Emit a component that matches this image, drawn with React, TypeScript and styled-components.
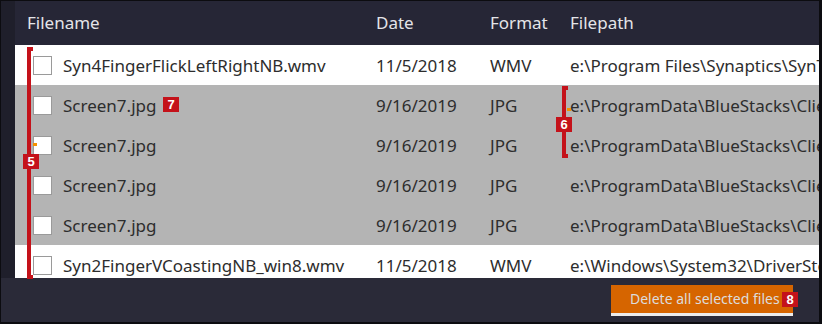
import React from 'react';
import styled, { createGlobalStyle } from 'styled-components';

const GlobalStyle = createGlobalStyle`
  html, body { margin: 0; padding: 0; background: #2a2a38; }
  body { font-family: "Noto Sans", "Open Sans", sans-serif; }
`;

// layout
const Frame = styled.div`
  position: relative;
  width: 822px;
  height: 324px;
  box-sizing: border-box;
  border: 1px solid #0c0c10;
  border-right-width: 3px;
  border-bottom-width: 2px;
  background: #2a2a38;
  display: flex;
  flex-direction: column;
  overflow: hidden;
`;

const Body = styled.div`
  display: flex;
  height: 277px;
`;

const LeftStrip = styled.div`
  width: 14px;
  background: #1f1f2b;
`;

const Table = styled.div`
  flex: 1;
  overflow: hidden;
`;

const Row = styled.div<{ $bg: string; $h: number }>`
  display: grid;
  grid-template-columns: 351px 114px 80px 1fr;
  height: ${(p) => p.$h}px;
  align-items: center;
  background: ${(p) => p.$bg};
  font-size: 17px;
  color: #2d2d2d;
  white-space: nowrap;
`;

const Head = styled(Row)`
  color: #e4e4e8;
  padding-bottom: 2px;
  box-sizing: border-box;
`;

const Cell = styled.div<{ $pl?: number }>`
  padding-left: ${(p) => p.$pl ?? 10}px;
  overflow: hidden;
  display: flex;
  align-items: center;
`;

const Check = styled.span`
  width: 17px;
  height: 17px;
  border: 1px solid #9a9a9a;
  background: #fff;
  margin-right: 11px;
  flex: none;
`;

const Footer = styled.div`
  flex: 1;
  display: flex;
  justify-content: flex-end;
  align-items: flex-start;
  padding: 7px 26px 0 0;
`;

const DeleteBtn = styled.button`
  width: 182px;
  height: 31px;
  border: none;
  border-bottom: 3px solid #ececec;
  background: #d66500;
  color: #dcdcdc;
  font-family: "Noto Sans", "Open Sans", sans-serif;
  font-size: 14px;
  text-align: left;
  padding: 0 0 1px 19px;
`;

// annotations
const Badge = styled.span<{ $x: number; $y: number }>`
  position: absolute;
  left: ${(p) => p.$x}px;
  top: ${(p) => p.$y}px;
  width: 16px;
  height: 15px;
  background: #c4121a;
  color: #fff;
  font-family: "Liberation Sans", Arial, sans-serif;
  font-weight: bold;
  font-size: 13px;
  line-height: 15px;
  text-align: center;
`;

const Bracket = styled.span<{ $x: number; $y: number; $h: number }>`
  position: absolute;
  left: ${(p) => p.$x}px;
  top: ${(p) => p.$y}px;
  width: 6px;
  height: ${(p) => p.$h}px;
  box-sizing: border-box;
  border: 4px solid #c4121a;
  border-right: none;
`;

const Dot = styled.span<{ $x: number; $y: number }>`
  position: absolute;
  left: ${(p) => p.$x}px;
  top: ${(p) => p.$y}px;
  width: 4px;
  height: 3px;
  background: #f39200;
`;

const rows = [
  { name: 'Syn4FingerFlickLeftRightNB.wmv', date: '11/5/2018', fmt: 'WMV', path: 'e:\\Program Files\\Synaptics\\SynTP\\Syn4FingerFlickLeftRightNB.wmv', sel: false },
  { name: 'Screen7.jpg', date: '9/16/2019', fmt: 'JPG', path: 'e:\\ProgramData\\BlueStacks\\Client\\Screen7.jpg', sel: true },
  { name: 'Screen7.jpg', date: '9/16/2019', fmt: 'JPG', path: 'e:\\ProgramData\\BlueStacks\\Client\\Screen7.jpg', sel: true },
  { name: 'Screen7.jpg', date: '9/16/2019', fmt: 'JPG', path: 'e:\\ProgramData\\BlueStacks\\Client\\Screen7.jpg', sel: true },
  { name: 'Screen7.jpg', date: '9/16/2019', fmt: 'JPG', path: 'e:\\ProgramData\\BlueStacks\\Client\\Screen7.jpg', sel: true },
  { name: 'Syn2FingerVCoastingNB_win8.wmv', date: '11/5/2018', fmt: 'WMV', path: 'e:\\Windows\\System32\\DriverStore\\Syn2FingerVCoastingNB_win8.wmv', sel: false },
];

const App = () => {
  return (
    <>
      <GlobalStyle />
      <Frame>
        <Body>
          <LeftStrip />
          <Table>
            <Head $bg="#262636" $h={44}>
              <Cell $pl={12}>Filename</Cell>
              <Cell>Date</Cell>
              <Cell>Format</Cell>
              <Cell>Filepath</Cell>
            </Head>
            {rows.map((r, i) => (
              <Row key={i} $bg={r.sel ? '#b4b4b4' : '#ffffff'} $h={40}>
                <Cell $pl={18}>
                  <Check />
                  {r.name}
                </Cell>
                <Cell>{r.date}</Cell>
                <Cell>{r.fmt}</Cell>
                <Cell>{r.path}</Cell>
              </Row>
            ))}
          </Table>
        </Body>
        <Footer>
          <DeleteBtn>Delete all selected files</DeleteBtn>
        </Footer>

        <Bracket $x={26} $y={46} $h={232} />
        <Badge $x={22} $y={153}>5</Badge>
        <Badge $x={162} $y={96}>7</Badge>
        <Bracket $x={561} $y={85} $h={72} />
        <Badge $x={555} $y={116}>6</Badge>
        <Badge $x={781} $y={291}>8</Badge>
        <Dot $x={32} $y={142} />
        <Dot $x={566} $y={107} />
      </Frame>
    </>
  );
};

export default App;
